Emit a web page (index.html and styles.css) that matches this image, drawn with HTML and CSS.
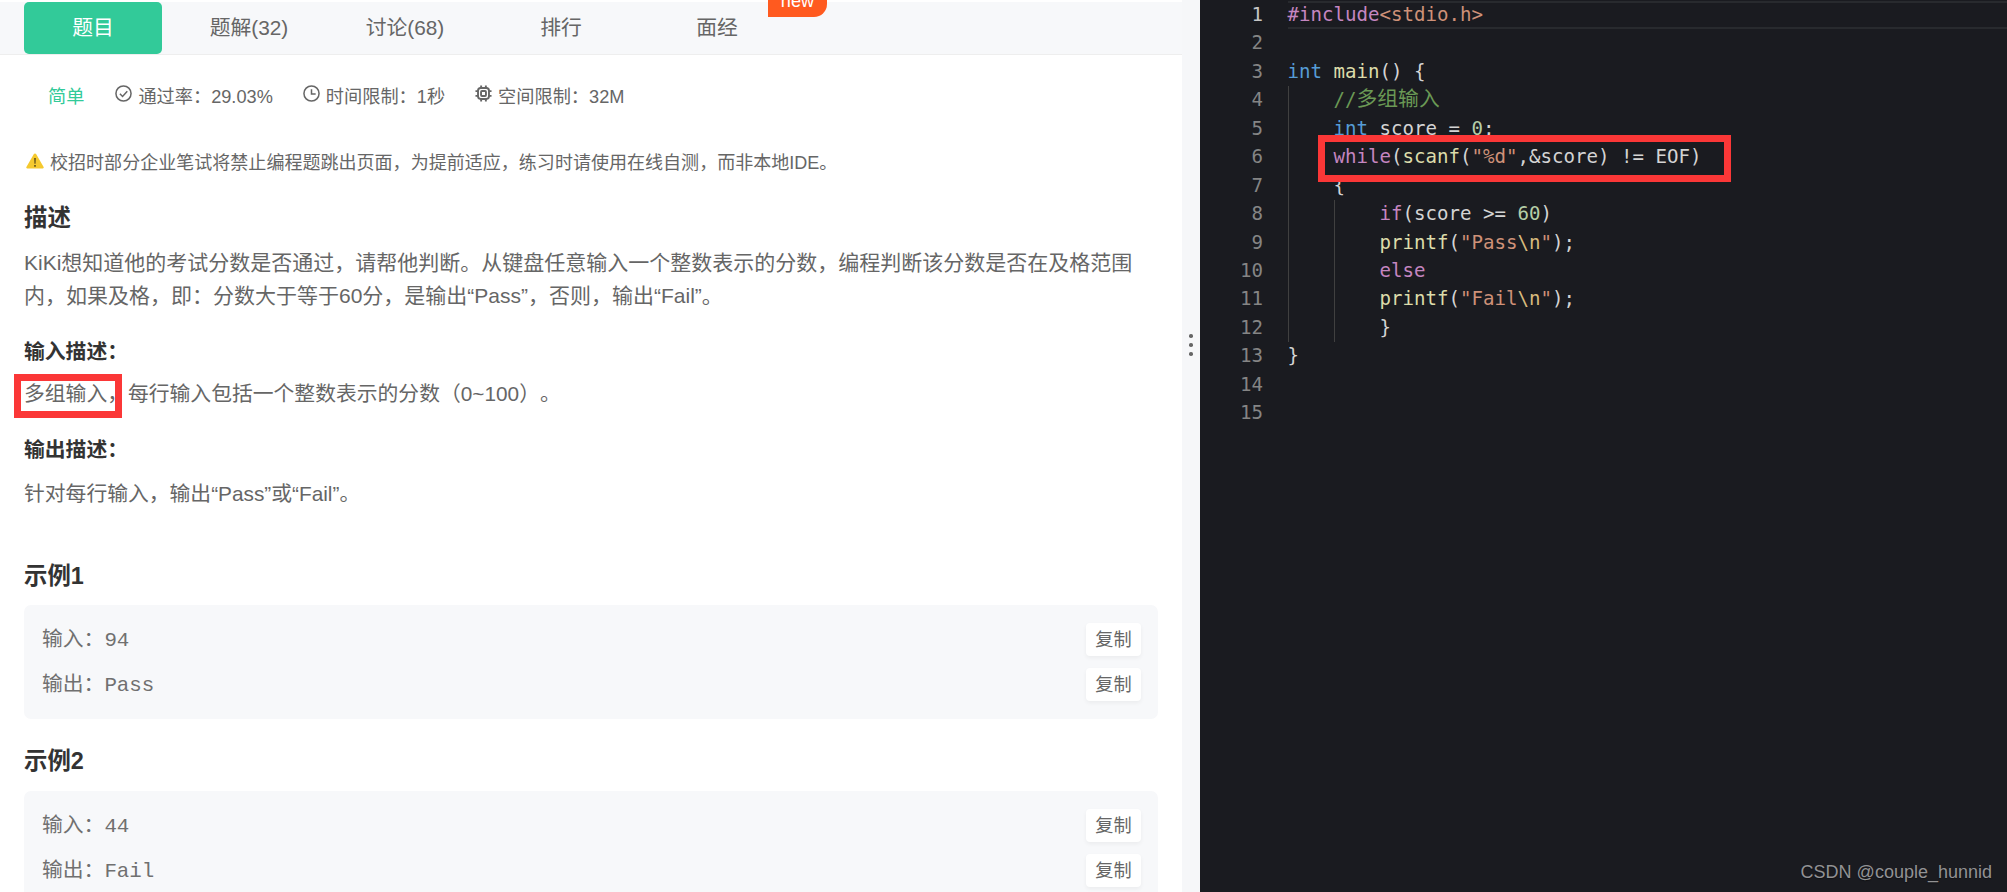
FILE: index.html
```html
<!DOCTYPE html>
<html lang="zh-CN">
  <head>
    <meta charset="UTF-8" />
    <meta name="viewport" content="width=device-width, initial-scale=1.0" />
    <title>题目</title>
    <link rel="stylesheet" href="styles.css">
  </head>
  <body>
    <div class="page">
      <section class="problem">
        <nav class="tabs">
          <a class="tab active">题目</a>
          <a class="tab">题解(32)</a>
          <a class="tab">讨论(68)</a>
          <a class="tab">排行</a>
          <a class="tab">面经</a>
        </nav>
        <span class="badge">new</span>

        <div class="meta">
          <span class="level">简单</span>
          <span class="meta-item">
            <svg class="icon" viewBox="0 0 18 18"><circle cx="9" cy="9" r="8"/><path d="M5.200 9.300l2.800 2.800 5-5.500"/></svg>
            通过率：29.03%
          </span>
          <span class="meta-item">
            <svg class="icon" viewBox="0 0 18 18"><circle cx="9" cy="9" r="8"/><path d="M9 4.400V9.600H13.400"/></svg>
            时间限制：1秒
          </span>
          <span class="meta-item">
            <svg class="icon chip" viewBox="0 0 18 18"><rect x="3.200" y="3.200" width="11.600" height="11.600" rx="2.800"/><rect x="6.400" y="6.400" width="5.200" height="5.200" rx="1"/><path d="M6.500 .5v2.700M11.500 .5v2.700M6.500 14.800v2.700M11.500 14.800v2.700M.5 6.500h2.700M.5 11.500h2.700M14.800 6.500h2.700M14.800 11.500h2.700"/></svg>
            空间限制：32M
          </span>
        </div>

        <p class="warning">
          <svg class="warn-icon" viewBox="0 0 18 16"><path class="warn-tri" d="M9 .4c.5 0 .9.3 1.1.7l7.5 13c.4.7-.1 1.500-.9 1.500H1.300c-.8 0-1.300-.8-.9-1.500l7.500-13C8.100.7 8.500.4 9 .4z"/><path class="warn-mark" d="M8.100 5h1.800l-.3 5.800H8.400zM8.100 12h1.800v1.800H8.100z"/></svg>
          校招时部分企业笔试将禁止编程题跳出页面，为提前适应，练习时请使用在线自测，而非本地IDE。
        </p>

        <h3 class="title title-desc">描述</h3>
        <p class="text text-desc">KiKi想知道他的考试分数是否通过，请帮他判断。从键盘任意输入一个整数表示的分数，编程判断该分数是否在及格范围内，如果及格，即：分数大于等于60分，是输出“Pass”，否则，输出“Fail”。</p>

        <h4 class="sub sub-in">输入描述：</h4>
        <p class="text text-in">多组输入，每行输入包括一个整数表示的分数（0~100）。</p>

        <h4 class="sub sub-out">输出描述：</h4>
        <p class="text text-out">针对每行输入，输出“Pass”或“Fail”。</p>

        <h3 class="title title-ex1">示例1</h3>
        <div class="sample">
          <div class="sample-row"><span class="sample-text">输入：94</span><button class="copy">复制</button></div>
          <div class="sample-row"><span class="sample-text">输出：Pass</span><button class="copy">复制</button></div>
        </div>

        <h3 class="title title-ex2">示例2</h3>
        <div class="sample">
          <div class="sample-row"><span class="sample-text">输入：44</span><button class="copy">复制</button></div>
          <div class="sample-row"><span class="sample-text">输出：Fail</span><button class="copy">复制</button></div>
        </div>

        <!-- red mark from the screenshot -->
        <div class="mark mark-input"></div>
      </section>

      <div class="splitter">
        <i></i><i></i><i></i>
      </div>

      <section class="editor">
        <div class="code">
          <div class="row current"><span class="num">1</span><span class="line"><span class="kw">#include</span><span class="str">&lt;stdio.h&gt;</span></span></div>
          <div class="row"><span class="num">2</span><span class="line"></span></div>
          <div class="row"><span class="num">3</span><span class="line"><span class="ty">int</span> <span class="fn">main</span>() {</span></div>
          <div class="row"><span class="num">4</span><span class="line"><span class="ind"></span><span class="com">//<span class="cjk">多组输入</span></span></span></div>
          <div class="row"><span class="num">5</span><span class="line"><span class="ind"></span><span class="ty">int</span> score = <span class="no">0</span>;</span></div>
          <div class="row"><span class="num">6</span><span class="line"><span class="ind"></span><span class="kw">while</span>(<span class="fn">scanf</span>(<span class="str">"%d"</span>,&amp;score) != EOF)</span></div>
          <div class="row"><span class="num">7</span><span class="line"><span class="ind"></span>{</span></div>
          <div class="row"><span class="num">8</span><span class="line"><span class="ind"></span><span class="ind"></span><span class="kw">if</span>(score &gt;= <span class="no">60</span>)</span></div>
          <div class="row"><span class="num">9</span><span class="line"><span class="ind"></span><span class="ind"></span><span class="fn">printf</span>(<span class="str">"Pass<span class="esc">\n</span>"</span>);</span></div>
          <div class="row"><span class="num">10</span><span class="line"><span class="ind"></span><span class="ind"></span><span class="kw">else</span></span></div>
          <div class="row"><span class="num">11</span><span class="line"><span class="ind"></span><span class="ind"></span><span class="fn">printf</span>(<span class="str">"Fail<span class="esc">\n</span>"</span>);</span></div>
          <div class="row"><span class="num">12</span><span class="line"><span class="ind"></span><span class="ind"></span>}</span></div>
          <div class="row"><span class="num">13</span><span class="line">}</span></div>
          <div class="row"><span class="num">14</span><span class="line"></span></div>
          <div class="row"><span class="num">15</span><span class="line"></span></div>
        </div>
        <div class="mark mark-while"></div>
        <span class="watermark">CSDN @couple_hunnid</span>
      </section>
    </div>
  </body>
</html>
```

FILE: styles.css
```css
* {
  box-sizing: border-box;
}
html,
body {
  margin: 0;
  height: 100%;
  overflow: hidden;
}
body {
  font-family: "Liberation Sans", "Noto Sans CJK SC", sans-serif;
  color: #666;
  text-spacing-trim: space-all;
}
.page {
  display: flex;
  height: 892px;
}

/* left side */
.problem {
  position: relative;
  width: 1182px;
  background: #fff;
  overflow: hidden;
}
.tabs {
  display: flex;
  gap: 18px;
  height: 53px;
  margin-top: 2px;
  padding-left: 24px;
  background: #f7f8fa;
  border-bottom: 1px solid #eee;
}
.tab {
  width: 138px;
  height: 52px;
  line-height: 52px;
  text-align: center;
  font-size: 20.8px;
}
.tab.active {
  background: #32ca99;
  color: #fff;
  border-radius: 5px;
}
/* the top of the word is cut by the window, as in the shot */
.badge {
  position: absolute;
  left: 768px;
  top: 0;
  width: 59px;
  height: 17px;
  background: #ff5a1f;
  border-radius: 0 0 13px 0;
  color: #fff;
  font-size: 18.2px;
  line-height: 3px;
  text-align: center;
  overflow: hidden;
}
.meta {
  display: flex;
  align-items: center;
  height: 24px;
  margin-top: 28px;
  padding-left: 48px;
  font-size: 18.2px;
}
.level {
  color: #32ca99;
  margin-right: 31px;
}
.meta-item {
  display: flex;
  align-items: center;
  gap: 6px;
  margin-right: 30px;
}
.icon {
  width: 17px;
  height: 17px;
  margin-top: -4px;
  fill: none;
  stroke: #666;
  stroke-width: 1.6;
}
.chip {
  stroke-width: 2;
}
.warning {
  display: flex;
  align-items: center;
  gap: 6px;
  height: 24px;
  margin: 42px 0 0 26px;
  font-size: 18.05px;
}
.warn-icon {
  width: 18px;
  height: 16px;
}
.warn-tri {
  fill: #f5c92e;
}
.warn-mark {
  fill: #6b5a1c;
}
.title {
  margin: 0 0 0 24px;
  font-size: 23.4px;
  line-height: 32px;
  color: #333;
}
.title-desc {
  margin-top: 29px;
}
.title-ex1 {
  margin-top: 50.5px;
}
.title-ex2 {
  margin-top: 26px;
}
.sub {
  margin: 0 0 0 24px;
  font-size: 20.8px;
  line-height: 28px;
  color: #333;
}
.sub-in {
  margin-top: 26px;
}
.sub-out {
  margin-top: 26.5px;
}
.text {
  margin: 0 0 0 24px;
  font-size: 20.8px;
  line-height: 33px;
}
.text-desc {
  width: 1125px;
  margin-top: 12px;
  font-size: 21px;
}
.text-in {
  margin-top: 10.5px;
}
.text-out {
  margin-top: 12.5px;
}
.sample {
  display: flex;
  flex-direction: column;
  gap: 12px;
  width: 1134px;
  margin: 13px 0 0 24px;
  padding: 18px;
  background: #f7f8fa;
  border-radius: 7px;
}
.title-ex2 + .sample {
  margin-top: 14px;
}
.sample-row {
  display: flex;
  align-items: center;
  justify-content: space-between;
  height: 33px;
}
.sample-text {
  padding-bottom: 5px;
  font-family: "Liberation Mono", "Noto Sans CJK SC", monospace;
  font-size: 20.8px;
  color: #707070;
}
.copy {
  width: 55px;
  height: 33px;
  margin-right: -1px;
  padding: 0 0 3px;
  border: 0;
  background: #fff;
  border-radius: 4px;
  box-shadow: 0 2px 4px rgba(0, 0, 0, 0.05);
  font-family: inherit;
  font-size: 18.2px;
  color: #666;
}

/* annotation boxes drawn over the screenshot */
.mark {
  position: absolute;
  border: 7px solid #fb3737;
}
.mark-input {
  left: 14px;
  top: 374px;
  width: 108px;
  height: 44px;
}
.mark-while {
  left: 118px;
  top: 135px;
  width: 413px;
  height: 47px;
}

.splitter {
  display: flex;
  flex-direction: column;
  align-items: center;
  justify-content: center;
  gap: 5.5px;
  width: 18px;
  padding-bottom: 202px;
  background: #f6f7f9;
}
.splitter i {
  width: 3.5px;
  height: 3.5px;
  background: #666;
  border-radius: 50%;
}

/* right side */
.editor {
  position: relative;
  flex: 1;
  background: #1a1b20;
  overflow: hidden;
}
.code {
  padding-top: 1px;
  font-family: "DejaVu Sans Mono", "Noto Sans CJK SC", monospace;
  font-size: 19.1px;
  color: #d4d4d4;
}
.row {
  display: flex;
  height: 28.45px;
  line-height: 28.45px;
}
.num {
  flex: none;
  width: 63px;
  text-align: right;
  color: #858585;
}
.current .num {
  color: #c6c6c6;
}
.line {
  flex: 1;
  margin-left: 24.5px;
  white-space: pre;
}
.current .line {
  border-top: 2px solid #282a2e;
  border-bottom: 2px solid #282a2e;
  line-height: 24.45px;
}
.ind {
  display: inline-block;
  width: 46px;
  height: 28.45px;
  vertical-align: top;
  border-left: 1px solid #404040;
}
.cjk {
  font-family: "Noto Sans CJK SC", sans-serif;
  font-size: 20.8px;
  line-height: 0;
}
.kw {
  color: #c586c0;
}
.ty {
  color: #569cd6;
}
.fn {
  color: #dcdcaa;
}
.str {
  color: #ce9178;
}
.esc {
  color: #d7ba7d;
}
.no {
  color: #b5cea8;
}
.com {
  color: #6a9955;
}
.watermark {
  position: absolute;
  right: 15px;
  top: 861px;
  font-size: 18px;
  line-height: 22px;
  color: #929294;
  text-shadow: 0 1px 1px rgba(0, 0, 0, 0.4);
}
```
